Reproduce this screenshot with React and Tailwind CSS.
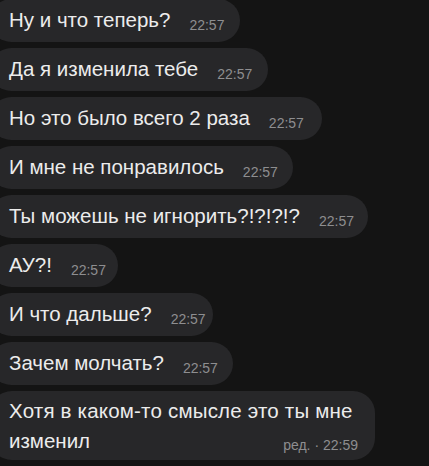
import React from "react";

const msgs = [
  { t: "Ну и что теперь?", w: "w-[250px]" },
  { t: "Да я изменила тебе", w: "w-[278px]" },
  { t: "Но это было всего 2 раза", w: "w-[332px]" },
  { t: "И мне не понравилось", w: "w-[303px]" },
  { t: "Ты можешь не игнорить?!?!?!?", w: "w-[378px]" },
  { t: "АУ?!", w: "w-[128px]" },
  { t: "И что дальше?", w: "w-[223px]" },
  { t: "Зачем молчать?", w: "w-[243px]" },
];

export default function App() {
  return (
    <div
      className="w-[429px] h-[466px] overflow-hidden bg-[#141414] text-[#ececec]"
      style={{ fontFamily: "'Liberation Sans', Arial, sans-serif" }}
    >
      <div className="flex flex-col items-start gap-[6px] -mt-[1px] -ml-[10px]">
        {msgs.map((m, i) => (
          <div
            key={i}
            className={`h-[43px] rounded-[22px] bg-[#272729] flex items-center pl-[19px] pr-[12px] ${m.w}`}
          >
            <span className="text-[20.5px] leading-none whitespace-nowrap">{m.t}</span>
            <span className="ml-[19px] mt-[9px] text-[14px] leading-none text-[#8e8e90] whitespace-nowrap">22:57</span>
          </div>
        ))}
        <div className="w-[385px] h-[69px] rounded-[22px] bg-[#272729] pl-[19px] pr-[17px] pt-[5px] text-[20.5px] leading-[30px]">
          <div className="whitespace-nowrap tracking-[0.2px]">Хотя в каком-то смысле это ты мне</div>
          <div className="flex items-center justify-between">
            <span>изменил</span>
            <span className="mt-[8px] text-[14px] leading-none text-[#8e8e90] whitespace-nowrap">ред. · 22:59</span>
          </div>
        </div>
      </div>
    </div>
  );
}
